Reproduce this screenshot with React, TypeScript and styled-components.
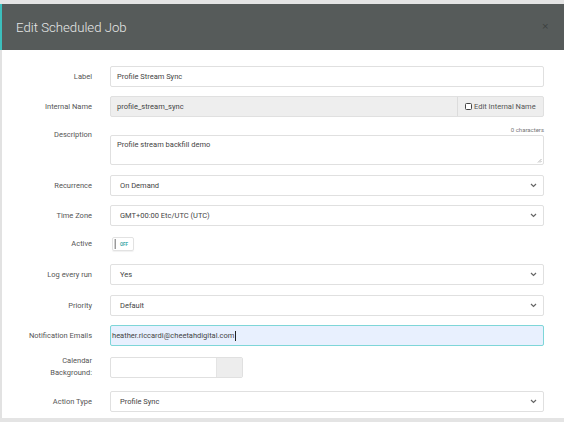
import React from "react";
import styled, { createGlobalStyle } from "styled-components";

const GlobalStyle = createGlobalStyle`
  html, body { margin: 0; padding: 0; background: #ffffff; }
  body { font-family: Roboto, "Noto Sans", "Liberation Sans", sans-serif; }
  * { box-sizing: border-box; }
`;

const Page = styled.div`
  width: 564px;
  height: 422px;
  background: #e4e4e4;
  padding-top: 4px;
  overflow: hidden;
  display: flex;
  flex-direction: column;
`;

const Header = styled.div`
  height: 46px;
  flex: none;
  background: #565b5a;
  border-left: 2px solid #3cbfbd;
  display: flex;
  align-items: center;
  justify-content: space-between;
  padding: 0 14px 0 14px;
`;

const Title = styled.h1`
  margin: 0;
  font-size: 13.2px;
  font-weight: 300;
  color: #e6e8e7;
`;

const Close = styled.span`
  font-size: 9px;
  color: #3b403f;
  margin-top: -2px;
  margin-right: 1px;
  font-family: "DejaVu Sans", sans-serif;
`;

const Body = styled.div`
  background: #ffffff;
  border-left: 2px solid #e2e2e2;
  padding: 16px 20px 0 0;
  height: 368px;
  flex: none;
  display: flex;
  flex-direction: column;
`;

const Row = styled.div<{ $mt?: number; $top?: boolean }>`
  display: grid;
  grid-template-columns: 90px 1fr;
  column-gap: 18px;
  align-items: ${(p) => (p.$top ? "start" : "center")};
  margin-top: ${(p) => p.$mt ?? 9}px;
`;

const Label = styled.label<{ $pt?: number }>`
  text-align: right;
  font-size: 7.5px;
  line-height: 12px;
  color: #555;
  padding-top: ${(p) => p.$pt ?? 0}px;
`;

const fieldBase = `
  height: 21px;
  border: 1px solid #e0e0e0;
  border-radius: 2px;
  font-size: 7.5px;
  color: #444;
  display: flex;
  align-items: center;
`;

const TextInput = styled.div<{ $gray?: boolean }>`
  ${fieldBase}
  padding-left: 6px;
  background: ${(p) => (p.$gray ? "#eeeeee" : "#ffffff")};
`;

const FocusInput = styled.div`
  ${fieldBase}
  padding-left: 1px;
  background: #e8f0fe;
  border-color: #7ed6d8;
`;

const Caret = styled.span`
  display: inline-block;
  width: 1px;
  height: 10px;
  background: #222;
  margin-left: 0.5px;
`;

const InputGroup = styled.div`
  ${fieldBase}
  background: #eeeeee;
  overflow: hidden;
`;

const GroupText = styled.div`
  flex: 1;
  padding-left: 6px;
`;

const Addon = styled.div`
  height: 100%;
  width: 86px;
  border-left: 1px solid #dcdcdc;
  display: flex;
  align-items: center;
  padding-left: 7px;
  gap: 2px;
  color: #555;
  font-size: 7.5px;
`;

const Check = styled.span`
  width: 7px;
  height: 7px;
  border: 1px solid #444;
  border-radius: 1.5px;
  background: #fff;
`;

const DescWrap = styled.div`
  display: flex;
  flex-direction: column;
`;

const CharCount = styled.div`
  text-align: right;
  font-size: 6px;
  color: #777;
  height: 10px;
  line-height: 10px;
`;

const TextArea = styled.div`
  position: relative;
  height: 30px;
  border: 1px solid #e0e0e0;
  border-radius: 2px;
  font-size: 7.5px;
  color: #444;
  padding: 4px 6px;
`;

const Resize = styled.svg`
  position: absolute;
  right: 1px;
  bottom: 1px;
`;

const Select = styled.div`
  ${fieldBase}
  padding: 0 6px 0 9px;
  justify-content: space-between;
  background: #fff;
`;

const Toggle = styled.div`
  width: 22px;
  height: 14px;
  margin-left: 2px;
  border: 1px solid #e2e2e2;
  border-radius: 2px;
  box-shadow: 0 1px 1px rgba(0,0,0,0.06);
  display: flex;
  align-items: center;
  padding-left: 1px;
  gap: 4px;
`;

const Knob = styled.span`
  width: 2px;
  height: 10px;
  background: #d0d0d0;
  border-right: 1px solid #9a9a9a;
`;

const Off = styled.span`
  font-size: 4.5px;
  font-weight: 700;
  color: #3aa7a7;
`;

const ColorPicker = styled.div`
  width: 133px;
  height: 21px;
  border: 1px solid #e0e0e0;
  border-radius: 2px;
  display: flex;
  overflow: hidden;
`;

const Swatch = styled.div`
  margin-left: auto;
  width: 26px;
  height: 100%;
  background: #ededed;
  border-left: 1px solid #e4e4e4;
`;

const Chevron = () => (
  <svg width="7" height="5" viewBox="0 0 7 5">
    <path d="M1 1 L3.5 3.5 L6 1" fill="none" stroke="#666" strokeWidth="1.2" />
  </svg>
);

const SelectField = ({ value }: { value: string }) => (
  <Select>
    <span>{value}</span>
    <Chevron />
  </Select>
);

export default function App() {
  return (
    <>
      <GlobalStyle />
      <Page>
        <Header>
          <Title>Edit Scheduled Job</Title>
          <Close>×</Close>
        </Header>
        <Body>
          <Row $mt={0}>
            <Label>Label</Label>
            <TextInput>Profile Stream Sync</TextInput>
          </Row>
          <Row>
            <Label>Internal Name</Label>
            <InputGroup>
              <GroupText>profile_stream_sync</GroupText>
              <Addon>
                <Check />
                Edit Internal Name
              </Addon>
            </InputGroup>
          </Row>
          <Row $mt={8} $top>
            <Label $pt={4}>Description</Label>
            <DescWrap>
              <CharCount>0 characters</CharCount>
              <TextArea>
                Profile stream backfill demo
                <Resize width="5" height="5" viewBox="0 0 5 5">
                  <path d="M1 4.5 L4.5 1 M3 4.5 L4.5 3" stroke="#999" strokeWidth="0.7" />
                </Resize>
              </TextArea>
            </DescWrap>
          </Row>
          <Row $mt={10}>
            <Label>Recurrence</Label>
            <SelectField value="On Demand" />
          </Row>
          <Row>
            <Label>Time Zone</Label>
            <SelectField value="GMT+00:00 Etc/UTC (UTC)" />
          </Row>
          <Row $mt={11}>
            <Label>Active</Label>
            <Toggle>
              <Knob />
              <Off>OFF</Off>
            </Toggle>
          </Row>
          <Row $mt={13}>
            <Label>Log every run</Label>
            <SelectField value="Yes" />
          </Row>
          <Row $mt={10}>
            <Label>Priority</Label>
            <SelectField value="Default" />
          </Row>
          <Row>
            <Label>Notification Emails</Label>
            <FocusInput>
              heather.riccardi@cheetahdigital.com
              <Caret />
            </FocusInput>
          </Row>
          <Row $mt={9}>
            <Label>
              Calendar
              <br />
              Background:
            </Label>
            <ColorPicker>
              <Swatch />
            </ColorPicker>
          </Row>
          <Row $mt={12}>
            <Label>Action Type</Label>
            <SelectField value="Profile Sync" />
          </Row>
        </Body>
      </Page>
    </>
  );
}
